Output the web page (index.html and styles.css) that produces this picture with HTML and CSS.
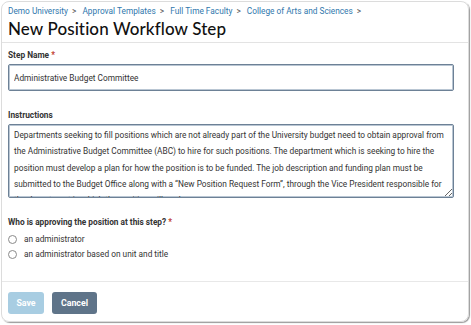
FILE: index.html
```html
<!DOCTYPE html>
<html lang="en">
<head>
<meta charset="utf-8">
<title>New Position Workflow Step</title>
<link rel="stylesheet" href="styles.css">
</head>
<body>
<div class="card">
  <div class="header">
    <nav class="crumbs">
      <a href="#">Demo University</a><span class="sep">&gt;</span>
      <a href="#">Approval Templates</a><span class="sep">&gt;</span>
      <a href="#">Full Time Faculty</a><span class="sep">&gt;</span>
      <a href="#">College of Arts and Sciences</a><span class="sep">&gt;</span>
    </nav>
    <h1 class="title">New Position Workflow Step</h1>
  </div>
  <div class="body">
    <label class="label">Step Name <span class="req">*</span></label>
    <input class="input" type="text" value="Administrative Budget Committee">
    <label class="label label-gap">Instructions</label>
    <textarea class="textarea">Departments seeking to fill positions which are not already part of the University budget need to obtain approval from the Administrative Budget Committee (ABC) to hire for such positions. The department which is seeking to hire the position must develop a plan for how the position is to be funded. The job description and funding plan must be submitted to the Budget Office along with a “New Position Request Form”, through the Vice President responsible for the department in which the position will work.</textarea>
    <div class="label label-q">Who is approving the position at this step? <span class="req">*</span></div>
    <div class="radios">
      <label class="radio"><span class="circle"></span>an administrator</label>
      <label class="radio"><span class="circle"></span>an administrator based on unit and title</label>
    </div>
  </div>
  <div class="footer">
    <button class="btn btn-save">Save</button>
    <button class="btn btn-cancel">Cancel</button>
  </div>
</div>
</body>
</html>
```
FILE: styles.css
```css
* { box-sizing: border-box; }
html, body { margin: 0; padding: 0; background: #fff; }
body { font-family: Roboto, "Liberation Sans", sans-serif; color: #333; height: 325px; }
.card {
  margin: 1px 2px 0 1px;
  height: 321px;
  border: 1px solid #dcdcdc;
  border-radius: 8px;
  box-shadow: 1px 1px 1px rgba(0,0,0,0.4);
  display: flex;
  flex-direction: column;
  overflow: hidden;
}
.header {
  padding: 3px 6px 3px;
  border-bottom: 1px solid #e3e3e3;
}
.crumbs { font-size: 8.3px; line-height: 13px; white-space: nowrap; }
.crumbs a { color: #2f77ad; text-decoration: none; }
.crumbs .sep { color: #555; margin: 0 4px 0 4px; }
.title {
  margin: 0;
  font-family: Lato, "Open Sans", sans-serif;
  font-weight: 500;
  font-size: 17px;
  line-height: 21px;
  color: #111;
  letter-spacing: 0.1px;
}
.body { padding: 5px 6px 0; flex: 1; display: flex; flex-direction: column; align-items: flex-start; border-bottom: 1px solid #e8e8e8; }
.label { display: block; font-size: 8.3px; font-weight: 700; color: #333; line-height: 14px; }
.req { color: #c0392b; }
.input {
  margin-top: 2px;
  width: 446px;
  height: 27px;
  border: 1px solid #6d8196;
  box-shadow: inset 0 0 0 1px #b9c6d3;
  border-radius: 2px;
  padding: 0 5px;
  font-family: Roboto, sans-serif;
  font-size: 8.3px;
  color: #333;
  outline: none;
}
.label-gap { margin-top: 17px; }
.textarea {
  margin-top: 2px;
  width: 446px;
  height: 74px;
  border: 1px solid #6d8196;
  box-shadow: inset 0 0 0 1px #b9c6d3;
  border-radius: 2px;
  padding: 2px 5px;
  font-family: Roboto, sans-serif;
  font-size: 8.3px;
  line-height: 16.3px;
  color: #333;
  resize: vertical;
  outline: none;
  overflow-y: scroll;
}
.textarea::-webkit-scrollbar { width: 8px; }
.textarea::-webkit-scrollbar-thumb { background: #8a8a8a; border-radius: 3px; border: 2px solid #fff; }
.textarea::-webkit-scrollbar-track { background: #fff; }
.label-q { margin-top: 17px; }
.radios { margin-top: 3px; display: flex; flex-direction: column; gap: 1px; }
.radio { display: flex; align-items: center; font-size: 8.3px; line-height: 14px; color: #333; }
.circle {
  width: 9px; height: 9px; border: 1px solid #8a8a8a; border-radius: 50%;
  margin-right: 7px; background: #fff;
}
.footer { padding: 10px 6px 7px; display: flex; gap: 8px; }
.btn {
  height: 22px;
  border: 0;
  border-radius: 3px;
  color: #fff;
  font-family: Roboto, sans-serif;
  font-weight: 700;
  font-size: 8.8px;
  padding: 0;
}
.btn-save { background: #a8cde2; width: 36px; }
.btn-cancel { background: #5f7489; width: 45px; }
```
